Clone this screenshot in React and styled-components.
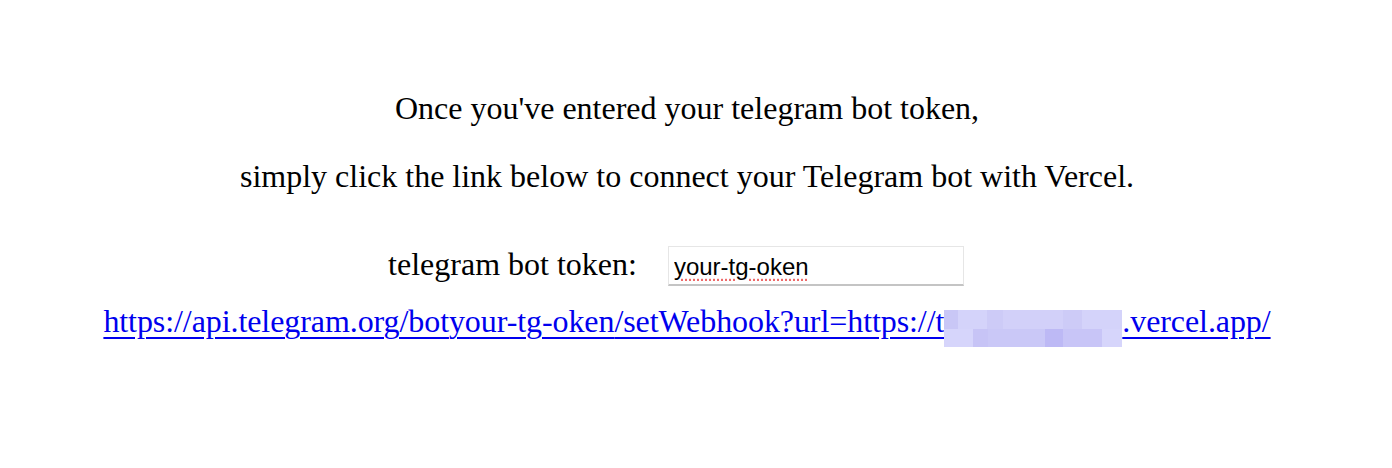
import React, {useState} from 'react';
import styled, {createGlobalStyle} from 'styled-components';

const GlobalStyle = createGlobalStyle`
  body {
    margin: 0;
    background: #fff;
    font-family: "Liberation Serif", "Times New Roman", serif;
  }
`;

const Page = styled.div`
  display: flex;
  flex-direction: column;
  align-items: center;
  padding: 88px 18px 0 0;
  color: #000;
  font-size: 32px;
`;

const Line = styled.p`
  margin: 0 0 ${(p) => p.$gap || 0}px;
  line-height: 40px;
  text-align: center;
`;

const TokenRow = styled.div`
  display: flex;
  align-items: flex-start;
  gap: 31px;
  margin-top: 48px;
  margin-left: -22px;
`;

const TokenLabel = styled.label`
  font-size: 32px;
  line-height: 40px;
`;

const TokenInput = styled.input`
  box-sizing: border-box;
  width: 296px;
  height: 40px;
  margin-top: 2px;
  padding: 2px 5px 0;
  border: 1px solid #e6e6e6;
  border-bottom: 2px solid #c4c4c4;
  font-family: "Liberation Sans", Arial, sans-serif;
  font-size: 24px;
  color: #000;
  text-decoration-line: underline;
  text-decoration-style: dotted;
  text-decoration-color: #ee6b6b;
  text-underline-offset: 5px;
  outline: none;
`;

const HookLink = styled.a`
  margin-top: 15px;
  color: #0000ee;
  font-size: 32px;
  line-height: 40px;
  letter-spacing: -0.08px;
  text-decoration: underline;
  text-decoration-thickness: 2px;
  text-underline-offset: 5px;
  white-space: nowrap;
`;

const Mosaic = styled.span`
  display: inline-grid;
  grid-template-rows: 19px 18px;
  width: 178px;
  vertical-align: 3px;
`;

const MosaicRow = styled.span`
  display: flex;
`;

const Cell = styled.span`
  display: block;
  height: 100%;
  background: ${(p) => p.$c};
`;

const topCells = [
  [14, '#c9c7f6'],
  [29, '#d4d3fa'],
  [16, '#cdcbf7'],
  [60, '#d2d0f9'],
  [19, '#cdcbf7'],
  [40, '#d4d3fa'],
];

const bottomCells = [
  [29, '#d6d5fb'],
  [15, '#c7c4f6'],
  [57, '#cac8f7'],
  [18, '#bdb9f5'],
  [39, '#c8c5f7'],
  [20, '#d6d5fb'],
];

const Blur = () => (
  <Mosaic>
    <MosaicRow>
      {topCells.map(([w, c], i) => (
        <Cell key={i} $c={c} style={{width: w}} />
      ))}
    </MosaicRow>
    <MosaicRow>
      {bottomCells.map(([w, c], i) => (
        <Cell key={i} $c={c} style={{width: w}} />
      ))}
    </MosaicRow>
  </Mosaic>
);

const App = () => {
  const [token, setToken] = useState('your-tg-oken');

  return (
    <>
      <GlobalStyle />
      <Page>
        <Line $gap={28}>Once you've entered your telegram bot token,</Line>
        <Line>simply click the link below to connect your Telegram bot with Vercel.</Line>
        <TokenRow>
          <TokenLabel htmlFor="token">telegram bot token:</TokenLabel>
          <TokenInput
            id="token"
            value={token}
            onChange={(e) => setToken(e.target.value)}
          />
        </TokenRow>
        <HookLink href="#">
          https://api.telegram.org/bot{token}/setWebhook?url=https://t
          <Blur />
          .vercel.app/
        </HookLink>
      </Page>
    </>
  );
};

export default App;
